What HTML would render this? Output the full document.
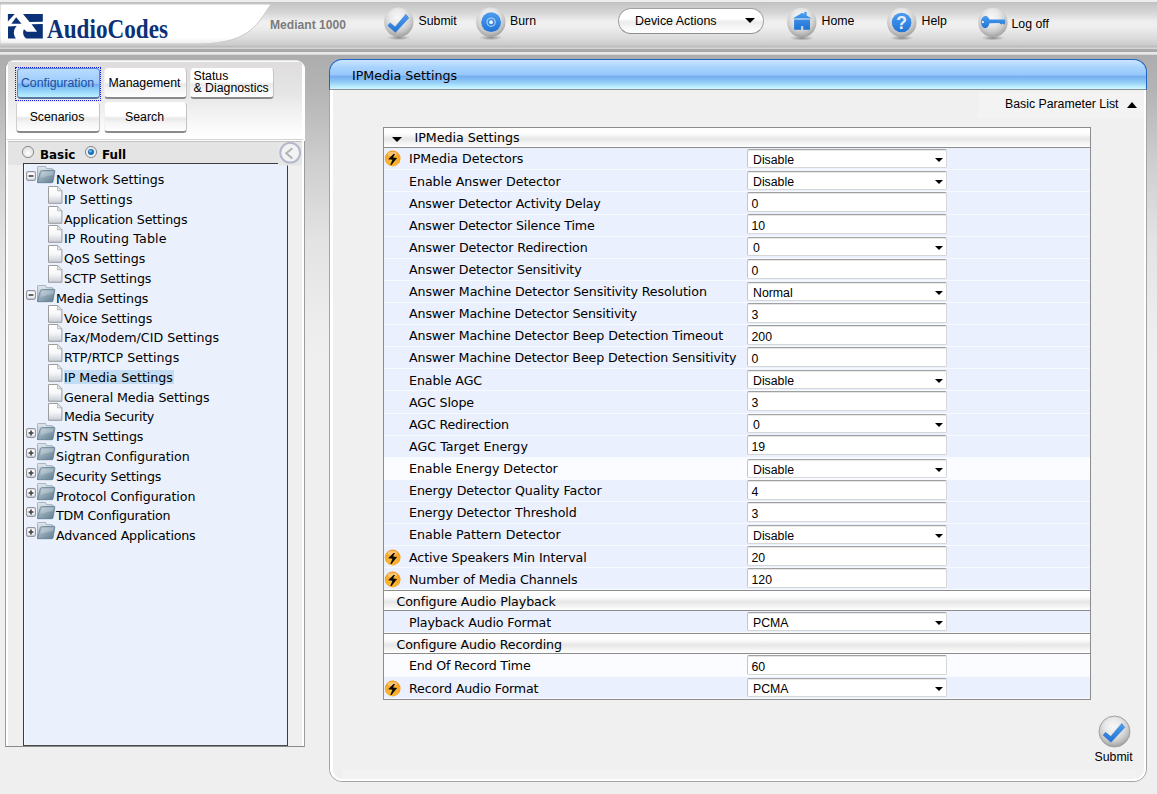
<!DOCTYPE html><html lang="en"><head><meta charset="utf-8"><title>IPMedia Settings</title><style>
*{box-sizing:border-box}
html,body{margin:0;padding:0}
body{width:1157px;height:794px;overflow:hidden;position:relative;font-family:"Liberation Sans", Arial, sans-serif;font-size:12.3px;color:#000;
 background:linear-gradient(to bottom,#adadad 0,#adadad 55px,#b4b4b4 90px,#cfcfcf 165px,#e3e3e3 240px,#ececec 315px,#efefef 360px,#efefef 100%);}
.abs{position:absolute}
#topbar{position:absolute;left:0;top:0;width:1157px;height:55px;
 background:linear-gradient(to bottom,#ededed 0,#ededed 1.5px,#bebebe 2px,#c6c6c6 4px,#d4d4d4 12px,#f0f0f0 22px,#eeeeee 27px,#dcdcdc 38px,#cbcbcb 45px,#b8b8b8 47px,#d6d6d6 48px,#d6d6d6 49px,#a9a9a9 49px,#a9a9a9 51.5px,#e6e6e6 52px,#e9e9e9 54px,#c4c4c4 55px);}
.tbtxt{position:absolute;font:12.3px "Liberation Sans", Arial, sans-serif;white-space:nowrap;color:#000;line-height:14px}
.verd{font-family:"DejaVu Sans", Verdana, sans-serif}
#lp{position:absolute;left:5px;top:60px;width:300px;height:687px;border-radius:9px 9px 0 0;border:1px solid #d6d6d6;border-top-color:#e6e6e6;border-bottom-color:#8a8a8a;border-left-color:#9c9c9c;border-right-color:#fff;background:#efefef;overflow:hidden}
#lptop{position:absolute;left:0;top:0;width:298px;height:78px;background:linear-gradient(to bottom,#dedcdc 0,#e6e5e5 30px,#fafafa 65px,#ffffff 78px);border-left:2px solid #fff;border-right:2px solid #fff;border-top:1.5px solid #fbfbfb}
#lpmode{position:absolute;left:0;top:78px;width:298px;height:608px;border-top:1px solid #d2d2d2;border-left:2px solid #fff;border-right:2px solid #fff;background:linear-gradient(to bottom,#ffffff 0,#ffffff 1px,#c2c2c2 1px,#c2c2c2 2px,#e4e4e4 2px,#e4e4e4 25px,#efefef 25px)}
.tab{position:absolute;width:83px;height:31px;border-radius:4px;border:1px solid #f0f0f0;border-top-color:#fdfdfd;border-bottom:2px solid #8a8a8a;border-right-color:#c4c4c4;
 background:linear-gradient(to bottom,#ffffff 0,#ffffff 45%,#e9e9e9 55%,#f4f4f4 70%,#ffffff 100%);font:12.3px "Liberation Sans", Arial, sans-serif;text-align:center;line-height:28px;white-space:nowrap;padding-right:2px}
.tab.tsel{background:linear-gradient(to bottom,#b9dcff 0,#9ccbfb 48%,#6fb0f1 56%,#8fd0f8 75%,#bdf0ff 100%);color:#1d4f9e;border-color:#4f8ad6;border-bottom:2px solid #5878a0}
#tree{position:absolute;left:23px;top:163px;width:265px;height:583px;background:#eaf1fd;border:1px solid #3c3c3c;border-bottom-color:#4a4a4a;box-shadow:inset 1px 0 0 #f6f9ff}
.ti{position:absolute;font:12.65px "DejaVu Sans", Verdana, sans-serif;white-space:nowrap;line-height:17px;height:17px;color:#000}
#rp{position:absolute;left:329px;top:59px;width:818px;height:723px;border-radius:14px 14px 13px 13px;background:#f0f0f0;border:1px solid #a4a4a4;overflow:hidden}
#rpin{position:absolute;left:0;top:0;right:0;bottom:0;border:2px solid #fff;border-left-width:3px;border-bottom-width:2.5px;border-radius:12px}
#rtitle{position:absolute;left:329px;top:59px;width:818px;height:31px;border-radius:13px 13px 0 0;border:1px solid #1f63c4;border-left-width:1.5px;border-top-width:1.3px;border-bottom:1px solid #8a9099;
 background:linear-gradient(to bottom,#cbe6ff 0,#a9d3fd 25%,#97c8fb 50%,#77aeee 57%,#8fcaf6 75%,#c4f3ff 96%,#d4f8ff 100%)}
#tbl{position:absolute;left:383px;top:127px;width:708px;height:573px;border:1px solid #8c8c8c;background:#eaf0fd}
.hdr{position:absolute;left:0;width:706px;background:linear-gradient(to bottom,#ffffff 0,#fdfdfd 30%,#e6e6e6 58%,#efefef 72%,#ffffff 100%);border-bottom:1px solid #8c8c8c}
.row{position:absolute;left:0;width:706px;background:#eaf0fd;border-bottom:1px solid #f7faff}
.row.lt{background:#fafcff}
.lbl{position:absolute;left:25px;font:12.65px "DejaVu Sans", Verdana, sans-serif;white-space:nowrap;line-height:16px;color:#000}
.inp{position:absolute;left:363px;width:200px;height:20px;line-height:18px;padding-top:1.8px;background:#fff;border:1px solid #d6d6d6;border-top-color:#a0a0a0;border-left-color:#c6c6c6;border-radius:2px;font:12.3px/18px "Liberation Sans", Arial, sans-serif;padding-left:3.5px;white-space:nowrap;overflow:hidden;box-shadow:inset 0 1px 0 #e6e6e6}
.sel{position:absolute;left:363px;width:200px;height:18.5px;padding-top:1.8px;background:#fff;border:1px solid #d6d6d6;border-top-color:#a6a6a6;border-left-color:#c6c6c6;border-radius:2px;font:12.3px/16px "Liberation Sans", Arial, sans-serif;padding-left:5px;white-space:nowrap;overflow:hidden;box-shadow:inset 0 1px 0 #e8e8e8}
.arr{position:absolute;right:3px;top:8px;width:0;height:0;border-left:4px solid transparent;border-right:4px solid transparent;border-top:4px solid #000}
</style></head><body>
<svg width="0" height="0" style="position:absolute"><defs>
<radialGradient id="ball" cx="0.46" cy="0.34" r="0.66"><stop offset="0" stop-color="#f8f8f8"/><stop offset="0.4" stop-color="#e9e9e9"/><stop offset="0.72" stop-color="#cbcbcb"/><stop offset="0.92" stop-color="#adadad"/><stop offset="1" stop-color="#a0a0a0"/></radialGradient>
<linearGradient id="blu" x1="0" y1="0" x2="0" y2="1"><stop offset="0" stop-color="#4d9cf0"/><stop offset="1" stop-color="#1f74d4"/></linearGradient>
<filter id="soft" x="-10%" y="-10%" width="120%" height="130%"><feGaussianBlur stdDeviation="0.45"/></filter>
<radialGradient id="shad" cx="0.5" cy="0.5" r="0.5"><stop offset="0" stop-color="#666" stop-opacity="0.75"/><stop offset="1" stop-color="#888" stop-opacity="0"/></radialGradient>
<radialGradient id="orng" cx="0.45" cy="0.65" r="0.6"><stop offset="0" stop-color="#fbc33c"/><stop offset="0.6" stop-color="#f8ad2a"/><stop offset="1" stop-color="#f59e22"/></radialGradient>
<linearGradient id="fold" x1="0" y1="0" x2="1" y2="1"><stop offset="0" stop-color="#c4d1db"/><stop offset="0.45" stop-color="#93a9b8"/><stop offset="1" stop-color="#5d798c"/></linearGradient>
<linearGradient id="foldb" x1="0" y1="0" x2="0" y2="1"><stop offset="0" stop-color="#dfe6ec"/><stop offset="1" stop-color="#a9b8c4"/></linearGradient>
<linearGradient id="pg" x1="0" y1="0" x2="0" y2="1"><stop offset="0" stop-color="#ffffff"/><stop offset="0.5" stop-color="#f7f8fa"/><stop offset="0.85" stop-color="#d6dae1"/><stop offset="1" stop-color="#c6cad3"/></linearGradient>
<g id="ballg"><ellipse cx="15" cy="30.6" rx="12" ry="2.6" fill="url(#shad)"/><circle cx="15" cy="15" r="14.7" fill="url(#ball)" filter="url(#soft)"/></g>
<g id="folder"><path d="M0.4 1.4 Q0.4 0.4 1.4 0.4 L8.4 0.4 L9.6 2.7 L15 2.7 Q15.9 2.7 15.9 3.6 L15.9 12 L0.4 16.4 Z" fill="url(#foldb)" stroke="#8da1b1" stroke-width="0.8"/><path d="M4.6 4.7 L17.2 4.3 Q18 4.3 17.8 5.2 L16 15.8 Q15.8 16.7 15 16.7 L1 16.7 Q0.2 16.7 0.5 15.8 L3.4 5.6 Q3.7 4.7 4.6 4.7 Z" fill="url(#fold)" stroke="#55748a" stroke-width="0.7"/><path d="M5 6 L16.6 5.6 L16 9 C12 9.5 8 10.5 3.6 12 Z" fill="#ffffff" opacity="0.22"/></g>
<linearGradient id="pmg" x1="0" y1="0" x2="0" y2="1"><stop offset="0" stop-color="#ffffff"/><stop offset="0.6" stop-color="#f4f5f8"/><stop offset="1" stop-color="#d3d7e0"/></linearGradient>
<g id="page"><path d="M0.5 0.5 L9.6 0.5 L13.9 4.8 L13.9 17.3 L0.5 17.3 Z" fill="url(#pg)" stroke="#9c9c9c" stroke-width="1"/><path d="M9.6 0.5 L9.6 4.8 L13.9 4.8 Z" fill="#ececec" stroke="#a8a8a8" stroke-width="0.8"/></g>
<g id="bolt"><circle cx="8.45" cy="8" r="7.9" fill="url(#orng)"/><ellipse cx="8.2" cy="3.4" rx="4.6" ry="2.2" fill="#fff" opacity="0.35"/><path d="M10.9 3.4 L9.3 3.4 L3.9 8.7 L8.2 9.3 L6.1 14.4 L7.3 14.4 L12.9 7.4 L8.8 6.9 Z" fill="#0d0904"/></g>
</defs></svg>
<div id="topbar"></div>
<svg class="abs" style="left:0;top:0" width="280" height="55" viewBox="0 0 280 55">
<defs><linearGradient id="lgw" x1="0" y1="0" x2="0" y2="1"><stop offset="0" stop-color="#ffffff"/><stop offset="0.85" stop-color="#ffffff"/><stop offset="1" stop-color="#ececec"/></linearGradient></defs>
<path d="M0.6 4.5 L270.5 4.5 C258 22 252 42.6 200 43.6 L0.6 43.6 Z" fill="url(#lgw)"/>
<path d="M0 44.1 L200 44.1 C252 43 258 22 271 4.5" fill="none" stroke="#cdcdcd" stroke-width="1"/>
<g fill="#0b3177"><path d="M7.9 13.9 L14.7 13.9 L7.9 21.6 Z"/><path d="M16.2 17.3 L21.5 23.7 L11.4 23.7 Z"/><path d="M8 26.6 L16.7 26.1 C13.2 30 13 34.5 15.9 38.6 L8 38.6 Z"/><path d="M23 13.9 L42.8 13.9 L42.8 21.7 L29.6 22 Z"/><path d="M31.6 24.3 L42.8 23.9 L42.8 38.6 L26.2 38.6 C23 36 22.4 32 24 29.2 L26.8 31.7 L37.1 31.7 Z"/></g>
<text x="47" y="38.2" font-family='"Liberation Serif", "Times New Roman", serif' font-weight="bold" font-size="26.5" fill="#0b3177" textLength="121" lengthAdjust="spacingAndGlyphs">AudioCodes</text>
</svg>
<div class="tbtxt" style="left:270px;top:17.5px;font-weight:bold;color:#7b7b7b;font-size:12.1px">Mediant 1000</div>
<svg class="abs" style="left:383px;top:7px" width="32" height="38" viewBox="0 0 32 38"><g transform="translate(0.80,0.10)"><use href="#ballg"/><path d="M4.0 18.6 L6.3 15.8 L11.3 19.8 L22.1 7.2 L24.9 11.0 L11.6 25.4 Z" fill="url(#blu)" stroke="#2a6fc4" stroke-width="0.5"/></g></svg>
<div class="tbtxt" style="left:418.5px;top:14px">Submit</div>
<svg class="abs" style="left:475px;top:7px" width="32" height="38" viewBox="0 0 32 38"><g transform="translate(0.80,0.10)"><use href="#ballg"/><circle cx="15.3" cy="15.1" r="9.9" fill="url(#blu)"/><circle cx="15.3" cy="15.1" r="4.1" fill="none" stroke="#a4caf2" stroke-width="1.3"/><circle cx="15.3" cy="15.1" r="1.9" fill="#eef6ff"/></g></svg>
<div class="tbtxt" style="left:510px;top:14px">Burn</div>
<div class="abs" style="left:618px;top:8px;width:146px;height:26px;border-radius:13px;border:1px solid #a2a2a2;border-bottom-color:#8e8e8e;background:linear-gradient(to bottom,#ffffff 0,#ffffff 40%,#ececec 55%,#f6f6f6 75%,#ffffff 100%)"></div>
<div class="tbtxt" style="left:635px;top:14px;font-size:12.45px">Device Actions</div>
<div class="abs" style="left:745px;top:18px;width:0;height:0;border-left:5px solid transparent;border-right:5px solid transparent;border-top:5.5px solid #000"></div>
<svg class="abs" style="left:786px;top:7px" width="32" height="38" viewBox="0 0 32 38"><g transform="translate(0.80,0.50)"><use href="#ballg"/><path d="M6 10.9 L15.35 5.3 L17.4 6.5 L17.4 4.6 L19.9 4.6 L19.9 8 L24.9 10.9 Z M7.3 11.9 L23.2 11.9 L23.2 22.2 L16.4 22.2 L16.4 18.7 L14.3 18.7 L14.3 22.2 L7.3 22.2 Z" fill="url(#blu)"/></g></svg>
<div class="tbtxt" style="left:821.5px;top:14px">Home</div>
<svg class="abs" style="left:886px;top:7px" width="32" height="38" viewBox="0 0 32 38"><g transform="translate(0.80,0.40)"><use href="#ballg"/><circle cx="14.8" cy="15.1" r="9.8" fill="url(#blu)"/><text x="14.9" y="21.6" text-anchor="middle" font-family='"Liberation Sans", Arial, sans-serif' font-weight="bold" font-size="17.5" fill="#e4eefa">?</text></g></svg>
<div class="tbtxt" style="left:921.5px;top:14px">Help</div>
<svg class="abs" style="left:977px;top:7px" width="32" height="38" viewBox="0 0 32 38"><g transform="translate(0.90,0.40)"><use href="#ballg"/><path d="M3.2 14.7 C3.2 10.5 5.4 8.5 7.6 8.5 C9.6 8.5 10.8 10 11.5 12.2 L27.3 12.2 L27.3 15.5 L26.3 17.3 L24.8 16 L23.4 17.2 L21.3 15.7 L11.5 15.9 C10.9 19 9.4 20.8 7.4 20.8 C5.2 20.8 3.2 18.6 3.2 14.7 Z" fill="url(#blu)"/><circle cx="5" cy="14.7" r="1.1" fill="#f2f6fb"/></g></svg>
<div class="tbtxt" style="left:1011.5px;top:17px">Log off</div>
<div id="lp"><div id="lptop"></div><div id="lpmode"></div></div>
<div class="abs" style="left:15px;top:67px;width:86px;height:34px;border:1px dotted #1212d8"></div>
<div class="tab tsel" style="left:17px;top:68px;">Configuration</div>
<div class="tab" style="left:104px;top:68px;">Management</div>
<div class="tab" style="left:190px;top:68px;width:84px;text-align:left;padding-left:2.5px;line-height:12px;padding-top:1px">Status<br>&amp; Diagnostics</div>
<div class="tab" style="left:16px;top:102px;width:84px;height:31px;line-height:29px;border-left-color:#cfcfcf">Scenarios</div>
<div class="tab" style="left:104px;top:102px;height:31px;line-height:29px">Search</div>
<svg class="abs" style="left:21px;top:145px" width="14" height="14" viewBox="0 0 14 14"><defs><radialGradient id="rg28" cx="0.5" cy="0.6" r="0.6"><stop offset="0" stop-color="#ffffff"/><stop offset="1" stop-color="#dcdcdc"/></radialGradient></defs><circle cx="7" cy="7" r="5.6" fill="url(#rg28)" stroke="#8c8c8c" stroke-width="1"/></svg>
<div class="abs verd" style="left:40px;top:147px;font-weight:bold;font-size:11.9px;line-height:16px">Basic</div>
<svg class="abs" style="left:84px;top:145px" width="14" height="14" viewBox="0 0 14 14"><defs><radialGradient id="rg91" cx="0.5" cy="0.6" r="0.6"><stop offset="0" stop-color="#ffffff"/><stop offset="1" stop-color="#dcdcdc"/></radialGradient></defs><circle cx="7" cy="7" r="5.6" fill="url(#rg91)" stroke="#8c8c8c" stroke-width="1"/><circle cx="7" cy="7" r="3" fill="#1672bc"/><circle cx="6.4" cy="6.2" r="1.3" fill="#6fbcf0"/></svg>
<div class="abs verd" style="left:102px;top:147px;font-weight:bold;font-size:11.9px;line-height:16px">Full</div>
<div class="abs" style="left:304px;top:141px;width:1px;height:606px;background:#9c9c9c"></div>
<div id="tree"></div>
<svg class="abs" style="left:278px;top:142px" width="24" height="23.5" viewBox="0 0 24 23.5"><rect width="24" height="23.5" fill="#e6e6e6"/><circle cx="12.2" cy="10.7" r="9.9" fill="#f3f3f5" stroke="#b4b8cc" stroke-width="2"/><path d="M14.3 6.2 L8.3 11.3 L14.3 16.4" fill="none" stroke="#b2b2b2" stroke-width="2"/></svg>
<svg class="abs" style="left:26px;top:171px" width="10" height="10" viewBox="0 0 10 10"><rect x="0.6" y="0.6" width="8.8" height="8.8" rx="1.6" fill="url(#pmg)" stroke="#9494a2" stroke-width="1.1"/><path d="M2.6 5 L7.4 5" stroke="#4a4a4a" stroke-width="1.7"/></svg>
<svg class="abs" style="left:37px;top:166px" width="19" height="18" viewBox="0 0 19 18"><use href="#folder"/></svg>
<div class="ti" style="left:56px;top:171.13px;letter-spacing:-0.016px;">Network Settings</div>
<svg class="abs" style="left:48px;top:186.10px" width="15" height="18" viewBox="0 0 15 18"><use href="#page"/></svg>
<div class="ti" style="left:63.5px;top:191.13px;letter-spacing:0.126px;padding:0 1px 0 0.5px">IP Settings</div>
<svg class="abs" style="left:48px;top:206.10px" width="15" height="18" viewBox="0 0 15 18"><use href="#page"/></svg>
<div class="ti" style="left:63.5px;top:211.13px;letter-spacing:-0.155px;padding:0 1px 0 0.5px">Application Settings</div>
<svg class="abs" style="left:48px;top:225.10px" width="15" height="18" viewBox="0 0 15 18"><use href="#page"/></svg>
<div class="ti" style="left:63.5px;top:230.13px;letter-spacing:0.128px;padding:0 1px 0 0.5px">IP Routing Table</div>
<svg class="abs" style="left:48px;top:245.10px" width="15" height="18" viewBox="0 0 15 18"><use href="#page"/></svg>
<div class="ti" style="left:63.5px;top:250.13px;letter-spacing:-0.023px;padding:0 1px 0 0.5px">QoS Settings</div>
<svg class="abs" style="left:48px;top:265.10px" width="15" height="18" viewBox="0 0 15 18"><use href="#page"/></svg>
<div class="ti" style="left:63.5px;top:270.13px;letter-spacing:-0.051px;padding:0 1px 0 0.5px">SCTP Settings</div>
<svg class="abs" style="left:26px;top:290px" width="10" height="10" viewBox="0 0 10 10"><rect x="0.6" y="0.6" width="8.8" height="8.8" rx="1.6" fill="url(#pmg)" stroke="#9494a2" stroke-width="1.1"/><path d="M2.6 5 L7.4 5" stroke="#4a4a4a" stroke-width="1.7"/></svg>
<svg class="abs" style="left:37px;top:285px" width="19" height="18" viewBox="0 0 19 18"><use href="#folder"/></svg>
<div class="ti" style="left:56px;top:290.13px;letter-spacing:-0.110px;">Media Settings</div>
<svg class="abs" style="left:48px;top:305.10px" width="15" height="18" viewBox="0 0 15 18"><use href="#page"/></svg>
<div class="ti" style="left:63.5px;top:310.13px;letter-spacing:-0.094px;padding:0 1px 0 0.5px">Voice Settings</div>
<svg class="abs" style="left:48px;top:324.10px" width="15" height="18" viewBox="0 0 15 18"><use href="#page"/></svg>
<div class="ti" style="left:63.5px;top:329.13px;letter-spacing:0.020px;padding:0 1px 0 0.5px">Fax/Modem/CID Settings</div>
<svg class="abs" style="left:48px;top:344.10px" width="15" height="18" viewBox="0 0 15 18"><use href="#page"/></svg>
<div class="ti" style="left:63.5px;top:349.13px;letter-spacing:0.040px;padding:0 1px 0 0.5px">RTP/RTCP Settings</div>
<svg class="abs" style="left:48px;top:364.10px" width="15" height="18" viewBox="0 0 15 18"><use href="#page"/></svg>
<div class="abs" style="left:64px;top:370px;width:110px;height:14px;background:#c2dcf4"></div>
<div class="ti" style="left:63.5px;top:369.13px;letter-spacing:-0.018px;padding:0 1px 0 0.5px">IP Media Settings</div>
<svg class="abs" style="left:48px;top:384.10px" width="15" height="18" viewBox="0 0 15 18"><use href="#page"/></svg>
<div class="ti" style="left:63.5px;top:389.13px;letter-spacing:-0.099px;padding:0 1px 0 0.5px">General Media Settings</div>
<svg class="abs" style="left:48px;top:403.10px" width="15" height="18" viewBox="0 0 15 18"><use href="#page"/></svg>
<div class="ti" style="left:63.5px;top:408.13px;letter-spacing:-0.272px;padding:0 1px 0 0.5px">Media Security</div>
<svg class="abs" style="left:26px;top:428px" width="10" height="10" viewBox="0 0 10 10"><rect x="0.6" y="0.6" width="8.8" height="8.8" rx="1.6" fill="url(#pmg)" stroke="#9494a2" stroke-width="1.1"/><path d="M2.6 5 L7.4 5" stroke="#4a4a4a" stroke-width="1.7"/><path d="M5 2.6 L5 7.4" stroke="#4a4a4a" stroke-width="1.7"/></svg>
<svg class="abs" style="left:37px;top:423px" width="19" height="18" viewBox="0 0 19 18"><use href="#folder"/></svg>
<div class="ti" style="left:56px;top:428.13px;letter-spacing:-0.108px;">PSTN Settings</div>
<svg class="abs" style="left:26px;top:448px" width="10" height="10" viewBox="0 0 10 10"><rect x="0.6" y="0.6" width="8.8" height="8.8" rx="1.6" fill="url(#pmg)" stroke="#9494a2" stroke-width="1.1"/><path d="M2.6 5 L7.4 5" stroke="#4a4a4a" stroke-width="1.7"/><path d="M5 2.6 L5 7.4" stroke="#4a4a4a" stroke-width="1.7"/></svg>
<svg class="abs" style="left:37px;top:443px" width="19" height="18" viewBox="0 0 19 18"><use href="#folder"/></svg>
<div class="ti" style="left:56px;top:448.13px;letter-spacing:-0.077px;">Sigtran Configuration</div>
<svg class="abs" style="left:26px;top:468px" width="10" height="10" viewBox="0 0 10 10"><rect x="0.6" y="0.6" width="8.8" height="8.8" rx="1.6" fill="url(#pmg)" stroke="#9494a2" stroke-width="1.1"/><path d="M2.6 5 L7.4 5" stroke="#4a4a4a" stroke-width="1.7"/><path d="M5 2.6 L5 7.4" stroke="#4a4a4a" stroke-width="1.7"/></svg>
<svg class="abs" style="left:37px;top:463px" width="19" height="18" viewBox="0 0 19 18"><use href="#folder"/></svg>
<div class="ti" style="left:56px;top:468.13px;letter-spacing:-0.146px;">Security Settings</div>
<svg class="abs" style="left:26px;top:488px" width="10" height="10" viewBox="0 0 10 10"><rect x="0.6" y="0.6" width="8.8" height="8.8" rx="1.6" fill="url(#pmg)" stroke="#9494a2" stroke-width="1.1"/><path d="M2.6 5 L7.4 5" stroke="#4a4a4a" stroke-width="1.7"/><path d="M5 2.6 L5 7.4" stroke="#4a4a4a" stroke-width="1.7"/></svg>
<svg class="abs" style="left:37px;top:483px" width="19" height="18" viewBox="0 0 19 18"><use href="#folder"/></svg>
<div class="ti" style="left:56px;top:488.13px;letter-spacing:-0.059px;">Protocol Configuration</div>
<svg class="abs" style="left:26px;top:507px" width="10" height="10" viewBox="0 0 10 10"><rect x="0.6" y="0.6" width="8.8" height="8.8" rx="1.6" fill="url(#pmg)" stroke="#9494a2" stroke-width="1.1"/><path d="M2.6 5 L7.4 5" stroke="#4a4a4a" stroke-width="1.7"/><path d="M5 2.6 L5 7.4" stroke="#4a4a4a" stroke-width="1.7"/></svg>
<svg class="abs" style="left:37px;top:502px" width="19" height="18" viewBox="0 0 19 18"><use href="#folder"/></svg>
<div class="ti" style="left:56px;top:507.13px;letter-spacing:-0.218px;">TDM Configuration</div>
<svg class="abs" style="left:26px;top:527px" width="10" height="10" viewBox="0 0 10 10"><rect x="0.6" y="0.6" width="8.8" height="8.8" rx="1.6" fill="url(#pmg)" stroke="#9494a2" stroke-width="1.1"/><path d="M2.6 5 L7.4 5" stroke="#4a4a4a" stroke-width="1.7"/><path d="M5 2.6 L5 7.4" stroke="#4a4a4a" stroke-width="1.7"/></svg>
<svg class="abs" style="left:37px;top:522px" width="19" height="18" viewBox="0 0 19 18"><use href="#folder"/></svg>
<div class="ti" style="left:56px;top:527.13px;letter-spacing:-0.203px;">Advanced Applications</div>
<div id="rp"><div class="abs" style="left:13px;top:710px;width:793px;height:10px;background:#f3f3f3"></div><div id="rpin"></div></div>
<div id="rtitle"></div>
<div class="abs verd" style="left:352px;top:68px;font-size:12.65px;line-height:16px;white-space:nowrap;letter-spacing:-0.012px;">IPMedia Settings</div>
<div class="abs" style="left:978px;top:92px;width:166px;height:26px;background:#f3f3f3"></div>
<div class="tbtxt" style="left:1005px;top:97px;font-size:12.3px">Basic Parameter List</div>
<div class="abs" style="left:1127px;top:102px;width:0;height:0;border-left:5px solid transparent;border-right:5px solid transparent;border-bottom:6px solid #000"></div>
<div id="tbl">
<div class="hdr" style="top:0px;height:20px"></div>
<div class="abs" style="left:8px;top:9px;width:0;height:0;border-left:5px solid transparent;border-right:5px solid transparent;border-top:5px solid #000"></div>
<div class="lbl" style="left:30.5px;top:1.63px;letter-spacing:-0.012px;">IPMedia Settings</div>
<div class="row" style="top:20.20px;height:22.12px"></div>
<svg class="abs" style="left:0;top:22px" width="18" height="18" viewBox="0 0 18 18"><use href="#bolt" transform="translate(0.2,0.5)"/></svg>
<div class="lbl" style="top:22.63px;letter-spacing:-0.036px;">IPMedia Detectors</div>
<div class="sel" style="top:21px">Disable<span class="arr"></span></div>
<div class="row" style="top:42.31px;height:22.11px"></div>
<div class="lbl" style="top:45.63px;letter-spacing:-0.047px;">Enable Answer Detector</div>
<div class="sel" style="top:43px">Disable<span class="arr"></span></div>
<div class="row" style="top:64.43px;height:22.12px"></div>
<div class="lbl" style="top:67.63px;letter-spacing:-0.187px;">Answer Detector Activity Delay</div>
<div class="inp" style="top:64px">0</div>
<div class="row" style="top:86.54px;height:22.11px"></div>
<div class="lbl" style="top:89.63px;letter-spacing:-0.168px;">Answer Detector Silence Time</div>
<div class="inp" style="top:86px">10</div>
<div class="row" style="top:108.66px;height:22.12px"></div>
<div class="lbl" style="top:111.63px;letter-spacing:-0.088px;">Answer Detector Redirection</div>
<div class="sel" style="top:109px">0<span class="arr"></span></div>
<div class="row" style="top:130.77px;height:22.12px"></div>
<div class="lbl" style="top:133.63px;letter-spacing:-0.107px;">Answer Detector Sensitivity</div>
<div class="inp" style="top:131px">0</div>
<div class="row" style="top:152.89px;height:22.12px"></div>
<div class="lbl" style="top:155.63px;letter-spacing:-0.102px;">Answer Machine Detector Sensitivity Resolution</div>
<div class="sel" style="top:154px">Normal<span class="arr"></span></div>
<div class="row" style="top:175.00px;height:22.12px"></div>
<div class="lbl" style="top:177.63px;letter-spacing:-0.132px;">Answer Machine Detector Sensitivity</div>
<div class="inp" style="top:175px">3</div>
<div class="row" style="top:197.12px;height:22.12px"></div>
<div class="lbl" style="top:199.63px;letter-spacing:-0.129px;">Answer Machine Detector Beep Detection Timeout</div>
<div class="inp" style="top:197px">200</div>
<div class="row" style="top:219.24px;height:22.11px"></div>
<div class="lbl" style="top:221.63px;letter-spacing:-0.136px;">Answer Machine Detector Beep Detection Sensitivity</div>
<div class="inp" style="top:219px">0</div>
<div class="row" style="top:241.35px;height:22.12px"></div>
<div class="lbl" style="top:244.63px;letter-spacing:-0.103px;">Enable AGC</div>
<div class="sel" style="top:242px">Disable<span class="arr"></span></div>
<div class="row" style="top:263.46px;height:22.12px"></div>
<div class="lbl" style="top:266.63px;letter-spacing:-0.127px;">AGC Slope</div>
<div class="inp" style="top:263px">3</div>
<div class="row" style="top:285.58px;height:22.12px"></div>
<div class="lbl" style="top:288.63px;letter-spacing:-0.170px;">AGC Redirection</div>
<div class="sel" style="top:286px">0<span class="arr"></span></div>
<div class="row" style="top:307.69px;height:22.11px"></div>
<div class="lbl" style="top:310.63px;letter-spacing:0.026px;">AGC Target Energy</div>
<div class="inp" style="top:307px">19</div>
<div class="row lt" style="top:329.81px;height:22.12px"></div>
<div class="lbl" style="top:332.63px;letter-spacing:-0.079px;">Enable Energy Detector</div>
<div class="sel" style="top:331px">Disable<span class="arr"></span></div>
<div class="row" style="top:351.92px;height:22.12px"></div>
<div class="lbl" style="top:354.63px;letter-spacing:-0.088px;">Energy Detector Quality Factor</div>
<div class="inp" style="top:352px">4</div>
<div class="row" style="top:374.04px;height:22.12px"></div>
<div class="lbl" style="top:376.63px;letter-spacing:-0.079px;">Energy Detector Threshold</div>
<div class="inp" style="top:374px">3</div>
<div class="row" style="top:396.15px;height:22.12px"></div>
<div class="lbl" style="top:398.63px;letter-spacing:0.006px;">Enable Pattern Detector</div>
<div class="sel" style="top:397px">Disable<span class="arr"></span></div>
<div class="row" style="top:418.27px;height:22.12px"></div>
<svg class="abs" style="left:0;top:421px" width="18" height="18" viewBox="0 0 18 18"><use href="#bolt" transform="translate(0.2,0.5)"/></svg>
<div class="lbl" style="top:421.63px;letter-spacing:-0.082px;">Active Speakers Min Interval</div>
<div class="inp" style="top:418px">20</div>
<div class="row" style="top:440.38px;height:22.12px"></div>
<svg class="abs" style="left:0;top:443px" width="18" height="18" viewBox="0 0 18 18"><use href="#bolt" transform="translate(0.2,0.5)"/></svg>
<div class="lbl" style="top:443.63px;letter-spacing:-0.128px;">Number of Media Channels</div>
<div class="inp" style="top:440px">120</div>
<div class="abs" style="left:0;top:462px;width:706px;height:1px;background:#8c8c8c"></div>
<div class="hdr" style="top:463px;height:20px"></div>
<div class="lbl" style="left:12.5px;top:465.63px;letter-spacing:-0.098px;">Configure Audio Playback</div>
<div class="row" style="top:483.00px;height:22.00px"></div>
<div class="lbl" style="top:486.63px;letter-spacing:-0.139px;">Playback Audio Format</div>
<div class="sel" style="top:484px">PCMA<span class="arr"></span></div>
<div class="abs" style="left:0;top:505px;width:706px;height:1px;background:#8c8c8c"></div>
<div class="hdr" style="top:506px;height:20px"></div>
<div class="lbl" style="left:12.5px;top:508.63px;letter-spacing:-0.122px;">Configure Audio Recording</div>
<div class="row lt" style="top:526.00px;height:22.50px"></div>
<div class="lbl" style="top:529.63px;letter-spacing:-0.200px;">End Of Record Time</div>
<div class="inp" style="top:527px">60</div>
<div class="row" style="top:548.50px;height:22.50px"></div>
<svg class="abs" style="left:0;top:552px" width="18" height="18" viewBox="0 0 18 18"><use href="#bolt" transform="translate(0.2,0.5)"/></svg>
<div class="lbl" style="top:552.63px;letter-spacing:-0.147px;">Record Audio Format</div>
<div class="sel" style="top:550px">PCMA<span class="arr"></span></div>
</div>
<svg class="abs" style="left:1097.5px;top:714.5px" width="33" height="33" viewBox="-1 -1 32 32"><circle cx="15" cy="15" r="15" fill="url(#ball)" stroke="#9c9c9c" stroke-width="0.9"/><path d="M4.0 18.6 L6.3 15.8 L11.3 19.8 L22.1 7.2 L24.9 11.0 L11.6 25.4 Z" fill="url(#blu)" stroke="#2a6fc4" stroke-width="0.5"/></svg>
<div class="tbtxt" style="left:1094.5px;top:749.5px">Submit</div>
</body></html>
